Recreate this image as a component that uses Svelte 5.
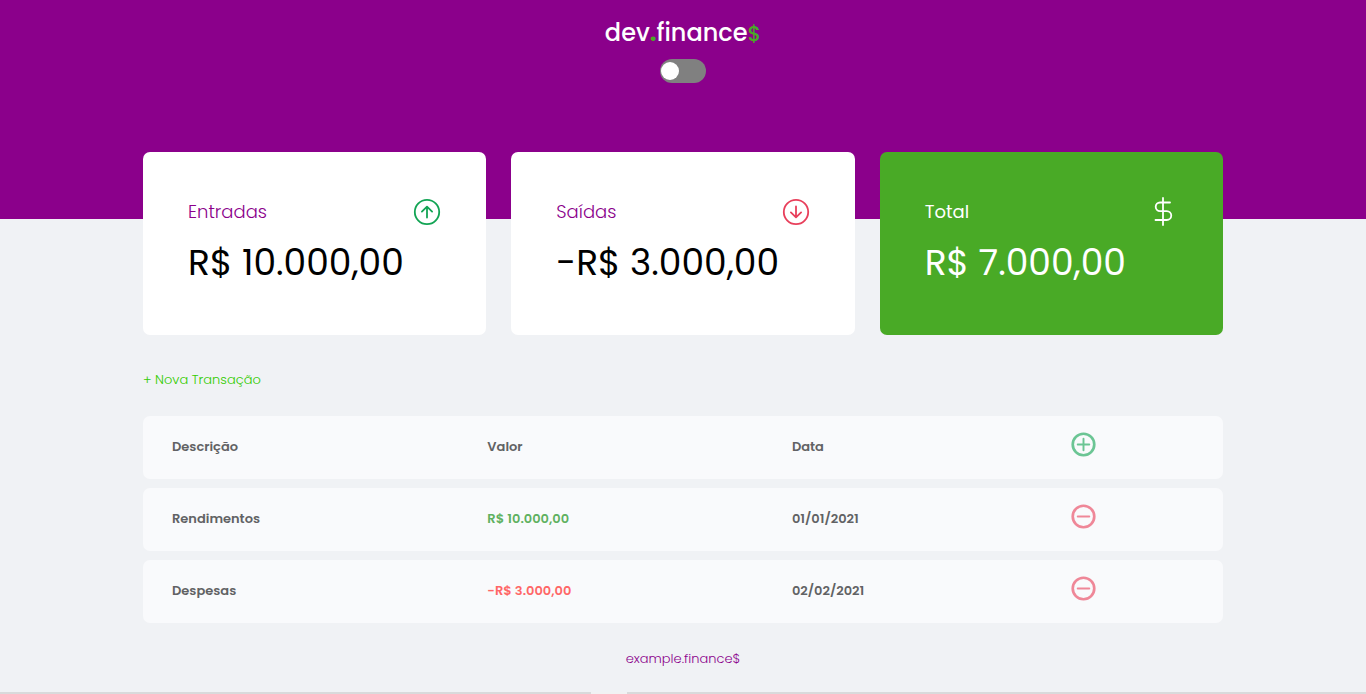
<script>
  let dark = $state(false);

  const transactions = [
    { description: 'Rendimentos', amount: 'R$ 10.000,00', kind: 'income', date: '01/01/2021' },
    { description: 'Despesas', amount: '-R$ 3.000,00', kind: 'expense', date: '02/02/2021' }
  ];
</script>

{#snippet arrow(down)}
  <svg class="icon" class:down viewBox="0 0 28 28" aria-hidden="true">
    <circle cx="14" cy="14" r="12.2" />
    <path d="M14 19.5V9M8.9 13.6L14 8.6l5.1 5" />
  </svg>
{/snippet}

{#snippet round(plus)}
  <svg class="round" class:plus viewBox="0 0 26 26" aria-hidden="true">
    <circle cx="13" cy="13" r="11.2" stroke-width="2.8" />
    <path d={plus ? 'M7 13h12M13 7v12' : 'M7 13h12'} stroke-width="2" />
  </svg>
{/snippet}

<div class="page">
  <header>
    <h1>dev<span class="dot">.</span>finance<span class="dollar">$</span></h1>
    <label class="switch">
      <input type="checkbox" role="switch" aria-label="Tema escuro" bind:checked={dark} />
    </label>
  </header>

  <main>
    <section class="cards">
      <article class="card">
        <h2>Entradas {@render arrow(false)}</h2>
        <p>R$ 10.000,00</p>
      </article>
      <article class="card">
        <h2>Saídas {@render arrow(true)}</h2>
        <p>-R$ 3.000,00</p>
      </article>
      <article class="card total">
        <h2>
          Total
          <svg class="money" viewBox="0 0 36 30" aria-hidden="true">
            <path d="M18 1v27M25 5.500h-10a4.300 4.300 0 0 0 0 8.600h6.800a4.450 4.450 0 0 1 0 8.900H10.500" />
          </svg>
        </h2>
        <p>R$ 7.000,00</p>
      </article>
    </section>

    <a class="new" href="#nova">+ Nova Transação</a>

    <table>
      <thead>
        <tr>
          <th class="c1">Descrição</th>
          <th class="c2">Valor</th>
          <th class="c3">Data</th>
          <th><button aria-label="Adicionar transação">{@render round(true)}</button></th>
        </tr>
      </thead>
      <tbody>
        {#each transactions as t}
          <tr>
            <td>{t.description}</td>
            <td class={t.kind}>{t.amount}</td>
            <td>{t.date}</td>
            <td><button aria-label="Remover transação">{@render round(false)}</button></td>
          </tr>
        {/each}
      </tbody>
    </table>
  </main>

  <footer>
    <p>example.finance$</p>
    <div class="strip"><i></i></div>
  </footer>
</div>

<style>
  :global(body) {
    margin: 0;
    background: #f0f2f5;
  }
  .page {
    box-sizing: border-box;
    min-height: 100vh;
    display: flex;
    flex-direction: column;
    font-family: Poppins, Inter, 'Noto Sans', sans-serif;
    color: #000;
  }
  h1, h2, p {
    margin: 0;
    font-weight: 400;
  }
  header {
    box-sizing: border-box;
    height: 219px;
    padding-top: 15px;
    background: #8b008b;
    display: flex;
    flex-direction: column;
    align-items: center;
    gap: 8px;
  }
  h1 {
    font-size: 24px;
    line-height: 36px;
    font-weight: 500;
    color: #fff;
  }
  h1 span {
    color: #49aa26;
  }
  h1 .dot {
    font-weight: 700;
  }
  h1 .dollar {
    font-size: 21px;
    line-height: 24px;
  }
  .switch {
    display: flex;
  }
  .switch input {
    appearance: none;
    box-sizing: border-box;
    width: 46px;
    height: 24px;
    margin: 0;
    padding: 3px 1px;
    border-radius: 12px;
    background: #808080;
    display: flex;
    cursor: pointer;
  }
  .switch input::before {
    content: '';
    width: 18px;
    height: 18px;
    border-radius: 50%;
    background: #fff;
  }
  .switch input:checked {
    justify-content: flex-end;
  }
  main {
    width: 90%;
    max-width: 1080px;
    margin: -67px auto 0;
  }
  .cards {
    display: grid;
    grid-template-columns: repeat(3, 1fr);
    gap: 25px;
  }
  .card {
    box-sizing: border-box;
    min-height: 183px;
    padding: 45px;
    border-radius: 7px;
    background: #fff;
  }
  .card h2 {
    display: flex;
    align-items: center;
    justify-content: space-between;
    font-size: 18px;
    line-height: 30px;
    font-weight: 300;
    color: #8b008b;
  }
  .card p {
    margin-top: 9px;
    font-size: 36px;
    line-height: 54px;
    white-space: nowrap;
  }
  .card.total {
    background: #49aa26;
    color: #fff;
  }
  .card.total h2 {
    color: #fff;
    font-weight: 400;
  }
  svg {
    display: block;
    fill: none;
    stroke-linecap: round;
    stroke-linejoin: round;
  }
  .icon {
    width: 28px;
    height: 28px;
    stroke: #12a454;
    stroke-width: 1.8;
  }
  .icon.down {
    stroke: #e83f5b;
    transform: rotate(180deg);
  }
  .money {
    width: 36px;
    height: 30px;
    margin-right: -3px;
    stroke: #fff;
    stroke-width: 1.8;
  }
  .new {
    display: block;
    width: fit-content;
    margin-top: 35px;
    font-size: 13px;
    line-height: 20px;
    font-weight: 300;
    color: #33cc00;
    text-decoration: none;
  }
  table {
    width: 100%;
    margin-top: 17px;
    border-collapse: separate;
    border-spacing: 0 9px;
    table-layout: fixed;
    font-size: 13px;
    line-height: 18px;
    color: #616264;
  }
  th, td {
    box-sizing: border-box;
    height: 63px;
    padding: 0 29px 2px;
    background: #f9fafc;
    text-align: left;
    font-weight: 600;
  }
  .c1 { width: 29.2%; }
  .c2 { width: 28.2%; }
  .c3 { width: 25.8%; }
  th:first-child, td:first-child {
    border-radius: 7px 0 0 7px;
  }
  th:last-child, td:last-child {
    border-radius: 0 7px 7px 0;
    padding-bottom: 6px;
  }
  .income { color: #5fb160; }
  .expense { color: #ff6666; }
  button {
    display: block;
    padding: 0;
    border: 0;
    background: none;
    cursor: pointer;
  }
  .round {
    width: 25px;
    height: 25px;
    stroke: #ef8798;
  }
  .round.plus {
    stroke: #6bc594;
  }
  footer {
    flex: 1;
    display: flex;
    flex-direction: column;
    justify-content: space-between;
    padding-top: 17px;
    text-align: center;
    font-size: 13px;
    line-height: 20px;
    color: #8b008b;
  }
  footer p {
    font-weight: 300;
  }
  .strip {
    height: 2px;
    background: #d9dadb;
    display: flex;
  }
  .strip i {
    width: 36px;
    margin-left: 43.3%;
    background: #f1f2f3;
  }
</style>
